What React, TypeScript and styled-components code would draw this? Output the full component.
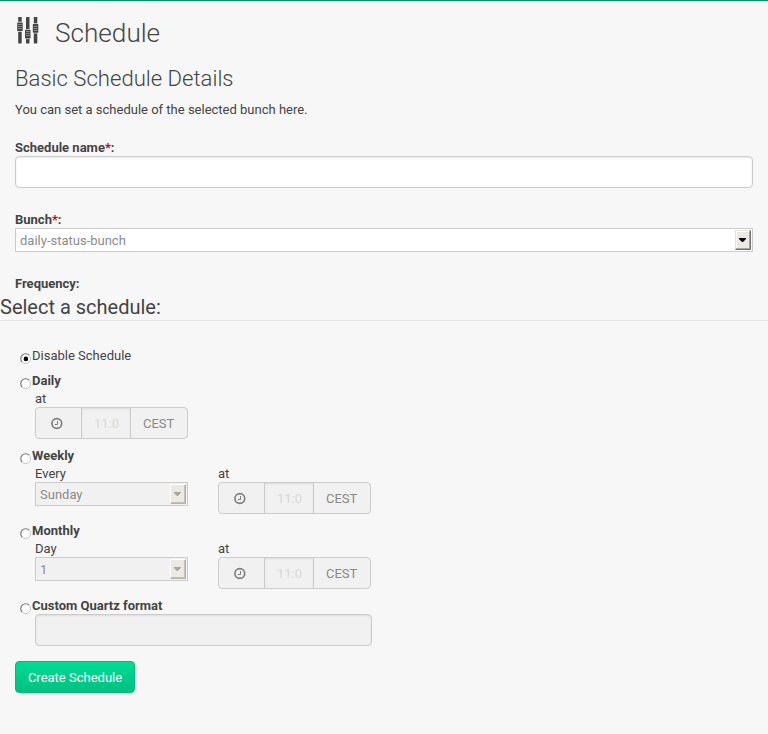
import React from 'react';
import styled, { createGlobalStyle, css } from 'styled-components';

const GlobalStyle = createGlobalStyle`
  *, *::before, *::after { box-sizing: border-box; }
  html, body { margin: 0; padding: 0; background: #f7f7f7; }
  body {
    font-family: Roboto, 'Liberation Sans', sans-serif;
    font-size: 13px;
    line-height: 18px;
    color: #444;
  }
`;

const Page = styled.main`
  min-height: 734px;
  border-top: 1px solid #00925f;
  background: #f7f7f7;
`;

const TitleBar = styled.header`
  display: flex;
  height: 50px;
  padding: 16px 15px 0 17px;
`;

const Title = styled.h1`
  margin: 0 0 0 16px;
  font-size: 26.15px;
  font-weight: 300;
  line-height: 32px;
`;

const Intro = styled.section`
  height: 87px;
  padding: 12px 15px 0;
`;

const SectionTitle = styled.h2`
  margin: 0;
  font-size: 22.1px;
  font-weight: 300;
  line-height: 30px;
`;

const Description = styled.p`
  margin: 8px 0 0;
`;

const Field = styled.div<{ $gap: number }>`
  padding: 0 15px;
  margin-bottom: ${(p) => p.$gap}px;
`;

const FieldLabel = styled.label`
  display: block;
  height: 18px;
  font-weight: 700;
  line-height: 20px;
`;

const Required = styled.span`
  color: #d00010;
`;

const TextInput = styled.input<{ $width?: string }>`
  display: block;
  width: ${(p) => p.$width ?? '100%'};
  height: 32px;
  padding: 6px 12px;
  border: 1px solid #ccc;
  border-radius: 4px;
  background: #fff;
  box-shadow: inset 0 1px 2px rgba(0, 0, 0, 0.09);
  font: inherit;
  outline: none;

  &:disabled { background: #f1f1f1; }
`;

const SelectFrame = styled.div<{ $disabled?: boolean }>`
  display: flex;
  align-items: center;
  justify-content: space-between;
  height: 24px;
  padding: 0 1px 0 4px;
  border: 1px solid #ccc;
  background: ${(p) => (p.$disabled ? '#f1f1f1' : '#fff')};
  color: #8c8c8c;
`;

const SelectValue = styled.span`
  line-height: 20px;
  padding-top: 1px;
`;

const ArrowButton = styled.span<{ $disabled?: boolean }>`
  display: flex;
  align-items: center;
  width: 16px;
  height: 20px;
  padding-left: 3px;
  border: 1px solid;
  background: #ece9e4;
  ${(p) =>
    p.$disabled
      ? css`border-color: #fff #b8b1a9 #b8b1a9 #fff; box-shadow: inset -1px -1px #c8c1b9;`
      : css`border-color: #e4e2de #73716e #73716e #e4e2de; box-shadow: inset -1px -1px #aaa7a2, inset 1px 1px #fff;`}
`;

const SubHeading = styled.h3`
  height: 29px;
  margin: 0 0 26px;
  border-bottom: 1px solid #e5e5e5;
  font-size: 20px;
  font-weight: 400;
  line-height: 30px;
`;

const Options = styled.div`
  padding-left: 20px;
`;

const Option = styled.div<{ $height: number }>`
  height: ${(p) => p.$height}px;
`;

const OptionLabel = styled.label<{ $bold?: boolean }>`
  display: flex;
  height: 18px;
  font-weight: ${(p) => (p.$bold ? 700 : 400)};
  svg { flex: none; margin-top: 6px; }
`;

const Controls = styled.div`
  display: flex;
  gap: 30px;
  padding-left: 15px;
`;

const Control = styled.div`
  width: 153px;
`;

const Caption = styled.div`
  height: 17px;
  line-height: 18px;
`;

const TimeGroup = styled.div`
  display: flex;
  height: 32px;
  overflow: hidden;
  border: 1px solid #ccc;
  border-radius: 4px;
  background: #f1f1f1;
  color: #888;
  line-height: 31px;
`;

const ClockCell = styled.span`
  display: flex;
  align-items: center;
  width: 45px;
  padding: 0 0 0 15px;
`;

const TimeCell = styled.span`
  width: 50px;
  padding-left: 12px;
  border: solid #ccc;
  border-width: 0 1px;
  box-shadow: inset 0 1px 2px rgba(0, 0, 0, 0.09);
  color: #d8d8d8;
`;

const ZoneCell = styled.span`
  padding-left: 12px;
`;

const QuartzRow = styled.div`
  margin-top: -1px;
  padding-left: 15px;
`;

const SubmitButton = styled.button`
  display: block;
  width: 120px;
  height: 32px;
  margin: 0 0 0 15px;
  padding: 2px 0 0;
  border: 1px solid #00bc7c;
  border-radius: 4px;
  background: linear-gradient(#00dc94, #00c080);
  color: #fff;
  font: inherit;
`;

function SlidersIcon() {
  const tracks = [
    { x: 1.2, knob: 5.4 },
    { x: 9, knob: 12.8 },
    { x: 16.8, knob: 7.1 },
  ];
  return (
    <svg width="22" height="27" viewBox="0 0 22 27">
      {tracks.map(({ x, knob }) => (
        <g key={x}>
          <rect x={x} y="0" width="3.5" height="26.4" rx="0.6" fill="#444" />
          <rect x={x - 1.1} y={knob - 0.7} width="5.7" height="10" fill="#f7f7f7" />
          <rect x={x - 1} y={knob} width="5.5" height="8.6" rx="0.6" fill="#444" />
          <path
            d={`M${x - 0.2} ${Math.floor(knob) + 2.5}h3.9m-3.9 2h3.9m-3.9 2h3.9`}
            stroke="#999"
            strokeWidth="0.8"
          />
        </g>
      ))}
    </svg>
  );
}

function RadioMark({ checked = false }: { checked?: boolean }) {
  return (
    <svg width="12" height="12" viewBox="0 0 12 12">
      <circle cx="5.8" cy="5.8" r="5.6" fill="#fff" />
      <path d="M9.2 2.2A4.95 4.95 0 0 1 2.2 9.2" fill="none" stroke="#bcbcbc" strokeWidth="0.9" />
      <path d="M2.2 9.2A4.95 4.95 0 0 1 9.2 2.2" fill="none" stroke="#707070" strokeWidth="1.1" />
      {checked && <circle cx="5.9" cy="5.9" r="2.3" fill="#000" />}
    </svg>
  );
}

function ClockIcon() {
  return (
    <svg width="12" height="13" viewBox="0 0 12 13" fill="none" stroke="#7c7c7c">
      <circle cx="5.8" cy="6.5" r="4.9" strokeWidth="1.6" />
      <path d="M6.5 4v3.5H3.8" strokeWidth="1" />
    </svg>
  );
}

function SelectBox({ value, disabled }: { value: string; disabled?: boolean }) {
  return (
    <SelectFrame $disabled={disabled}>
      <SelectValue>{value}</SelectValue>
      <ArrowButton $disabled={disabled}>
        <svg width="8" height="5" viewBox="0 0 8 5">
          {disabled && <path d="M1 1H8L4.5 5Z" fill="#fff" />}
          <path d="M0 0H7V1L4 4H3L0 1Z" fill={disabled ? '#aaa49e' : '#000'} />
        </svg>
      </ArrowButton>
    </SelectFrame>
  );
}

function TimeControl() {
  return (
    <Control>
      <Caption>at</Caption>
      <TimeGroup>
        <ClockCell><ClockIcon /></ClockCell>
        <TimeCell>11:0</TimeCell>
        <ZoneCell>CEST</ZoneCell>
      </TimeGroup>
    </Control>
  );
}

function RecurringOption({ name, caption, value }: { name: string; caption?: string; value?: string }) {
  return (
    <Option $height={75}>
      <OptionLabel $bold><RadioMark />{name}</OptionLabel>
      <Controls>
        {caption && value && (
          <Control>
            <Caption>{caption}</Caption>
            <SelectBox value={value} disabled />
          </Control>
        )}
        <TimeControl />
      </Controls>
    </Option>
  );
}

export default function App() {
  return (
    <>
      <GlobalStyle />
      <Page>
        <TitleBar>
          <SlidersIcon />
          <Title>Schedule</Title>
        </TitleBar>
        <Intro>
          <SectionTitle>Basic Schedule Details</SectionTitle>
          <Description>You can set a schedule of the selected bunch here.</Description>
        </Intro>
        <Field $gap={22}>
          <FieldLabel htmlFor="schedule-name">Schedule name<Required>*</Required>:</FieldLabel>
          <TextInput id="schedule-name" />
        </Field>
        <Field $gap={22}>
          <FieldLabel>Bunch<Required>*</Required>:</FieldLabel>
          <SelectBox value="daily-status-bunch" />
        </Field>
        <Field $gap={0}>
          <FieldLabel>Frequency:</FieldLabel>
        </Field>
        <SubHeading>Select a schedule:</SubHeading>
        <Options>
          <Option $height={25}>
            <OptionLabel><RadioMark checked />Disable Schedule</OptionLabel>
          </Option>
          <RecurringOption name="Daily" />
          <RecurringOption name="Weekly" caption="Every" value="Sunday" />
          <RecurringOption name="Monthly" caption="Day" value="1" />
          <Option $height={64}>
            <OptionLabel $bold><RadioMark />Custom Quartz format</OptionLabel>
            <QuartzRow><TextInput $width="337px" disabled /></QuartzRow>
          </Option>
        </Options>
        <SubmitButton>Create Schedule</SubmitButton>
      </Page>
    </>
  );
}
